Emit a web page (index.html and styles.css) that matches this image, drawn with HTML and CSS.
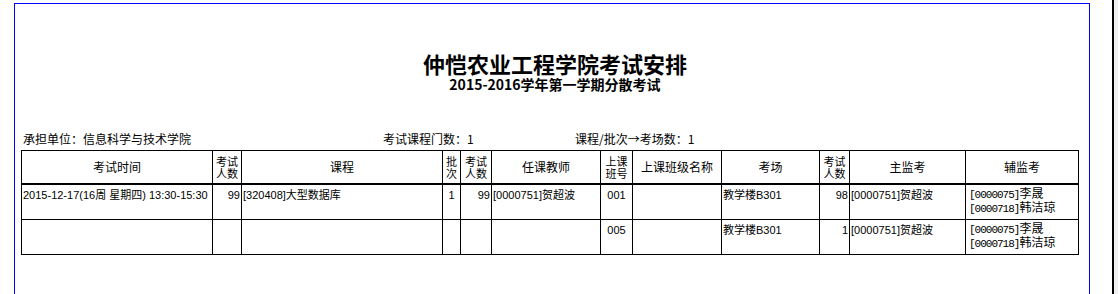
FILE: index.html
```html
<!DOCTYPE html>
<html lang="zh">
<head>
<meta charset="utf-8">
<title>考试安排</title>
<link rel="stylesheet" href="styles.css">
</head>
<body>
<div class="page">
  <div class="main">
    <div class="frame">
      <h1 class="title">仲恺农业工程学院考试安排</h1>
      <h2 class="subtitle">2015-2016学年第一学期分散考试</h2>
      <div class="info">
        <span class="info-a">承担单位：信息科学与技术学院</span>
        <span class="info-b">考试课程门数：1</span>
        <span class="info-c">课程/批次→考场数：1</span>
      </div>
      <table class="grid">
        <colgroup>
          <col class="c1"><col class="c2"><col class="c3"><col class="c4"><col class="c5"><col class="c6">
          <col class="c7"><col class="c8"><col class="c9"><col class="c10"><col class="c11"><col class="c12">
        </colgroup>
        <thead>
          <tr>
            <th>考试时间</th>
            <th class="two">考试<br>人数</th>
            <th>课程</th>
            <th class="two">批<br>次</th>
            <th class="two">考试<br>人数</th>
            <th>任课教师</th>
            <th class="two">上课<br>班号</th>
            <th>上课班级名称</th>
            <th>考场</th>
            <th class="two">考试<br>人数</th>
            <th>主监考</th>
            <th>辅监考</th>
          </tr>
        </thead>
        <tbody>
          <tr>
            <td class="nw">2015-12-17(16周 星期四) 13:30-15:30</td>
            <td class="num">99</td>
            <td>[320408]大型数据库</td>
            <td class="mid">1</td>
            <td class="num">99</td>
            <td>[0000751]贺超波</td>
            <td class="mid">001</td>
            <td></td>
            <td>教学楼B301</td>
            <td class="num">98</td>
            <td>[0000751]贺超波</td>
            <td class="assist"><span class="code">[0000075]</span>李晟<br><span class="code">[0000718]</span>韩洁琼</td>
          </tr>
          <tr>
            <td></td>
            <td></td>
            <td></td>
            <td></td>
            <td></td>
            <td></td>
            <td class="mid">005</td>
            <td></td>
            <td>教学楼B301</td>
            <td class="num">1</td>
            <td>[0000751]贺超波</td>
            <td class="assist"><span class="code">[0000075]</span>李晟<br><span class="code">[0000718]</span>韩洁琼</td>
          </tr>
        </tbody>
      </table>
    </div>
  </div>
  <div class="edge"></div>
</div>
</body>
</html>
```

FILE: styles.css
```css
html, body {
  margin: 0;
  padding: 0;
  background: #ffffff;
  height: 294px;
  overflow: hidden;
}
body {
  font-family: "Liberation Sans", "Noto Sans CJK SC", sans-serif;
  font-size: 12px;
  color: #000;
}
.page {
  display: flex;
  height: 294px;
}
.main {
  width: 1112px;
  padding: 3px 0 0 14px;
  box-sizing: border-box;
}
.frame {
  width: 1076px;
  height: 291px;
  box-sizing: border-box;
  border: 1px solid #0000ff;
  border-bottom: none;
  padding: 46px 0 0 6px;
}
.edge {
  flex: 1;
  border-left: 2px solid #000;
  background: #f0f0f0;
}
.title {
  margin: 0;
  font-family: "Noto Sans CJK SC", sans-serif;
  font-size: 22px;
  font-weight: bold;
  line-height: 26px;
  text-align: center;
}
.subtitle {
  margin: 0;
  font-family: "Noto Sans CJK SC", sans-serif;
  font-size: 14px;
  font-weight: bold;
  line-height: 16px;
  text-align: center;
}
.info {
  display: flex;
  margin-top: 39px;
  padding-left: 2px;
  line-height: 16px;
  font-family: "Noto Sans CJK SC", sans-serif;
  font-size: 12px;
}
.info-a { width: 360px; }
.info-b { width: 192px; }
.grid {
  margin-top: 3px;
  width: 1057px;
  table-layout: fixed;
  border-collapse: collapse;
  font-family: "Liberation Sans", "Noto Sans CJK SC", sans-serif;
}
.c1 { width: 191px; }
.c2 { width: 29px; }
.c3 { width: 201px; }
.c4 { width: 18px; }
.c5 { width: 31px; }
.c6 { width: 109px; }
.c7 { width: 32px; }
.c8 { width: 89px; }
.c9 { width: 98px; }
.c10 { width: 30px; }
.c11 { width: 116px; }
.c12 { width: 113px; }
.grid th, .grid td {
  border: 1px solid #000;
  padding: 0 1px;
  overflow: hidden;
}
.grid th {
  height: 32px;
  font-family: "Noto Sans CJK SC", sans-serif;
  font-weight: normal;
  font-size: 12px;
  line-height: 14px;
  text-align: center;
  vertical-align: middle;
  border-bottom-width: 2px;
}
.grid th.two {
  font-size: 11px;
  line-height: 12px;
  padding: 0;
}
.grid td {
  height: 35px;
  font-size: 11px;
  line-height: 14px;
  vertical-align: top;
  padding-top: 3px;
  text-align: left;
  box-sizing: border-box;
}
.grid td.nw { white-space: nowrap; }
.grid td.num { text-align: right; }
.grid td.mid { text-align: center; }
.grid td.assist {
  font-family: "Noto Sans CJK SC", sans-serif;
  font-size: 12px;
  line-height: 12px;
  padding-top: 2px;
  padding-left: 3px;
}
.code {
  font-family: "Liberation Mono", monospace;
  font-size: 11px;
  letter-spacing: -1px;
}
```
